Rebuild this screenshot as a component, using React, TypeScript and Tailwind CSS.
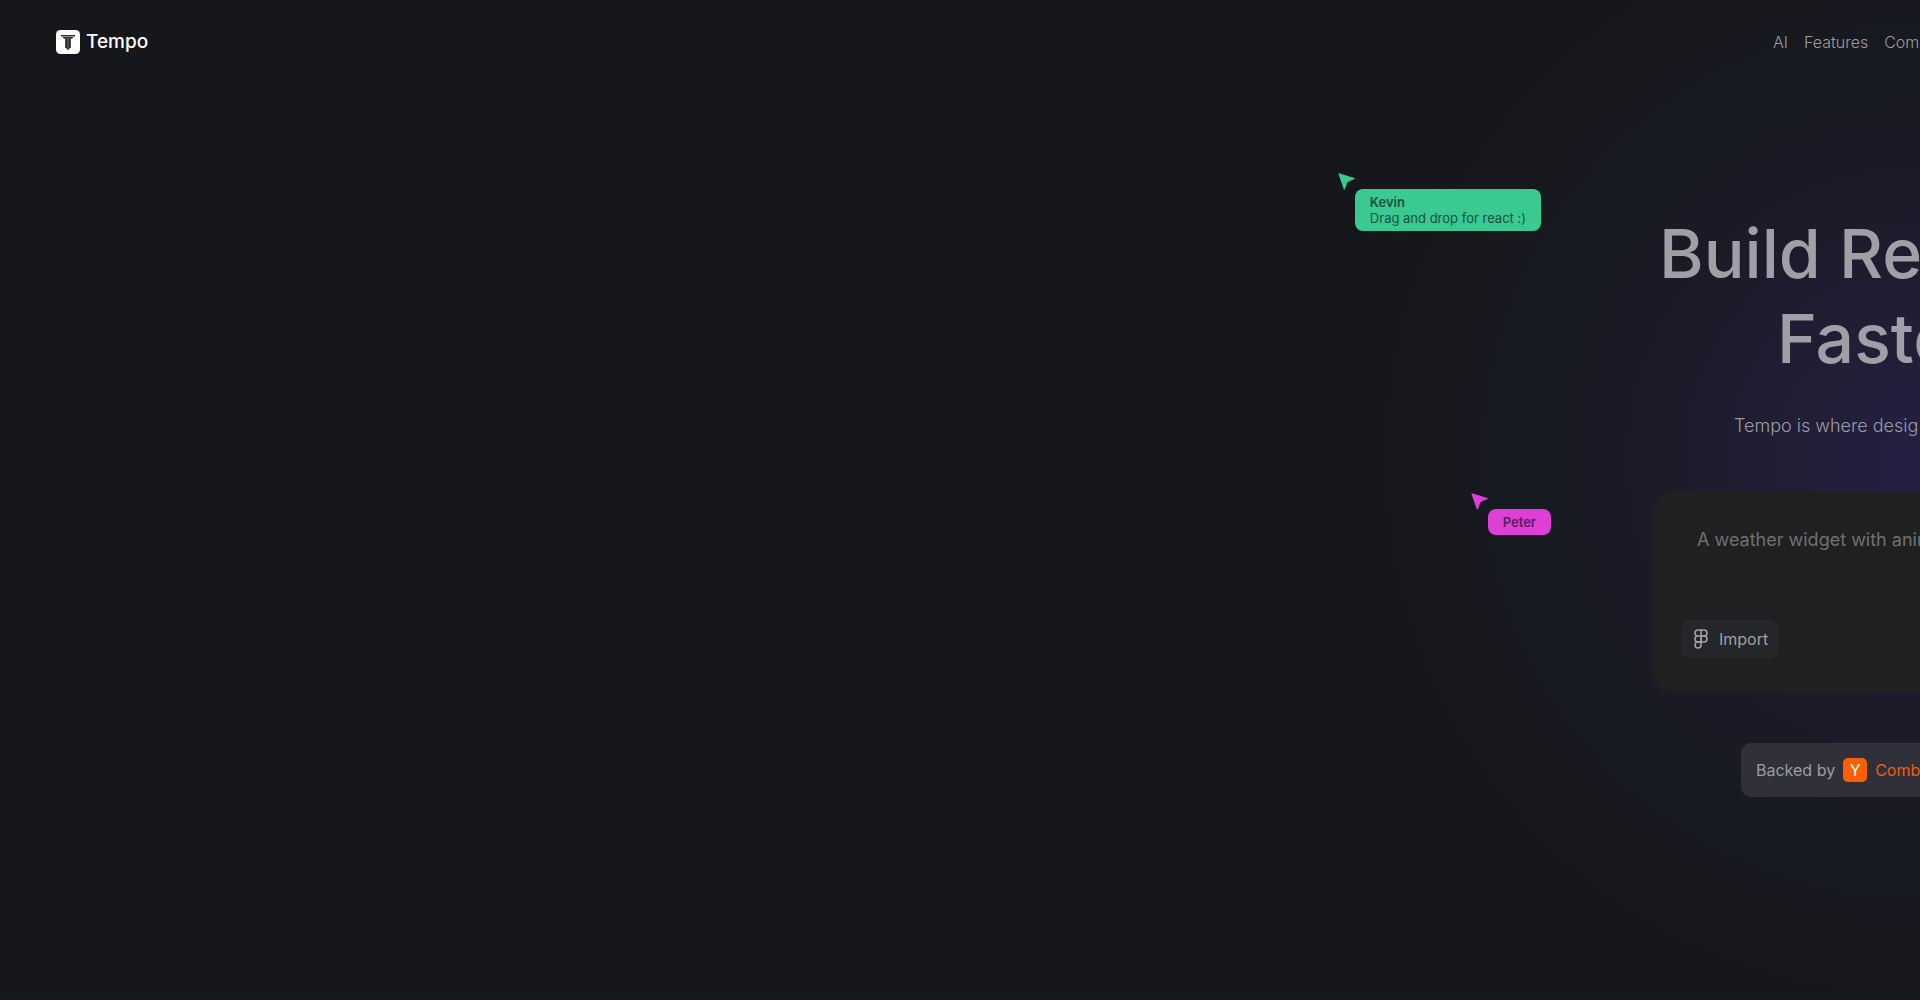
import { clsx } from "clsx";

const navLinks = ["AI", "Features", "Com"];

function LogoMark() {
  return (
    <svg viewBox="0 0 24 24" className="size-6" aria-hidden="true">
      <rect width="24" height="24" rx="4.500" fill="#fff" />
      <path d="M5 5h14v1.500H5zM6.500 7h11l-1.500 1.800H8z" fill="#2c2d31" />
      <path d="M9 8.500h6v8.700L12 20.200l-3-3z" fill="#4a4b50" />
      <path
        d="M10.500 9v8.500M13.500 9v8.500"
        stroke="#25262a"
        strokeWidth=".9"
      />
    </svg>
  );
}

function FigmaIcon() {
  return (
    <svg
      viewBox="0 0 14 20"
      className="h-5 w-3.5"
      fill="none"
      stroke="currentColor"
      strokeWidth="1.6"
      aria-hidden="true"
    >
      <path d="M7 1H4a3 3 0 0 0 0 6h3zM7 1h3a3 3 0 0 1 0 6H7zM7 7H4a3 3 0 0 0 0 6h3z" />
      <path d="M7 7h3a3 3 0 0 1 0 6H7z" />
      <path d="M7 13H4a3 3 0 1 0 3 3z" />
    </svg>
  );
}

interface CursorProps {
  name: string;
  message?: string;
  color: "green" | "pink";
  className?: string;
}

function Cursor({ name, message, color, className }: CursorProps) {
  return (
    <div
      className={clsx(
        "absolute flex flex-col",
        color === "green" ? "text-[#39c991]" : "text-[#de40d6]",
        className
      )}
    >
      <svg viewBox="0 0 17 17" className="size-[17px]" aria-hidden="true">
        <path
          d="M.4.8c-.2-.5.2-.8.7-.6l15.300 4.900c.6.2.6.8 0 1l-5.600 2.400c-.9.4-1.400.9-1.800 1.700l-2.100 6.100c-.3.6-.9.6-1.100 0z"
          fill="currentColor"
        />
      </svg>
      <div
        className={clsx(
          "ml-[17px] -mt-px rounded-lg px-[15px] py-[5px] text-[13px] leading-4 whitespace-nowrap",
          color === "green" ? "bg-[#39c991]" : "bg-[#de40d6]"
        )}
      >
        <p
          className={clsx(
            "font-semibold",
            color === "green" ? "text-[#17513d]" : "text-[#5d1c62]"
          )}
        >
          {name}
        </p>
        {message && <p className="text-[#17513d]">{message}</p>}
      </div>
    </div>
  );
}

export default function App() {
  return (
    <div className="relative flex min-h-screen flex-col overflow-hidden border-b border-[#1b1019] bg-[#15171a] bg-[radial-gradient(circle_560px_at_100%_46%,#261f43_0%,#211e36_22%,#1c1b2a_45%,#181a22_70%,#15171a_100%)] font-['Inter',sans-serif] text-[#9c9ca3]">
      <header className="flex h-[84px] items-center justify-between pl-14">
        <a href="#" className="flex items-center gap-[6px] text-white">
          <LogoMark />
          <span className="text-[19px] font-medium">Tempo</span>
        </a>
        <nav className="flex w-[147px] gap-4 font-light whitespace-nowrap text-[#9b9c9f]">
          {navLinks.map((link) => (
            <a key={link} href="#">
              {link}
            </a>
          ))}
        </nav>
      </header>

      <main className="flex flex-col items-end pt-[127px] whitespace-nowrap">
        <h1 className="flex flex-col items-end text-[68px] leading-[85px] font-medium text-[#9f9fa6]">
          <span className="w-[261px]">Build Re</span>
          <span className="w-[143px]">Faste</span>
        </h1>
        <p className="mt-[31px] w-[186px] text-lg leading-7 font-light">
          Tempo is where desig
        </p>

        <form className="mt-[52px] flex h-[200px] w-[268px] flex-col items-start justify-between rounded-l-[20px] bg-[#202021] pt-[34px] pb-[34px] pl-[29px]">
          <textarea
            aria-label="Prompt"
            rows={2}
            placeholder="A weather widget with anim"
            className="ml-4 w-[240px] resize-none overflow-hidden bg-transparent text-lg leading-7 outline-none placeholder:text-[#707073]"
          />
          <button
            type="button"
            className="flex h-[38px] items-center gap-[11px] rounded-lg bg-[#252629] pr-[11px] pl-[13px] text-[#a0a1a4]"
          >
            <FigmaIcon />
            Import
          </button>
        </form>

        <div className="mt-[51px] flex h-[54px] w-[179px] items-center gap-2 rounded-l-[10px] bg-[#30303a] pl-[15px]">
          <span>Backed by</span>
          <span className="flex size-6 shrink-0 items-center justify-center rounded-[5px] bg-[#ff5f00] text-white">
            Y
          </span>
          <span className="text-[#ec5d12]">Comb</span>
        </div>
      </main>

      <Cursor
        name="Kevin"
        message="Drag and drop for react :)"
        color="green"
        className="top-[173px] right-[379px]"
      />
      <Cursor
        name="Peter"
        color="pink"
        className="top-[493px] right-[369px]"
      />
    </div>
  );
}
